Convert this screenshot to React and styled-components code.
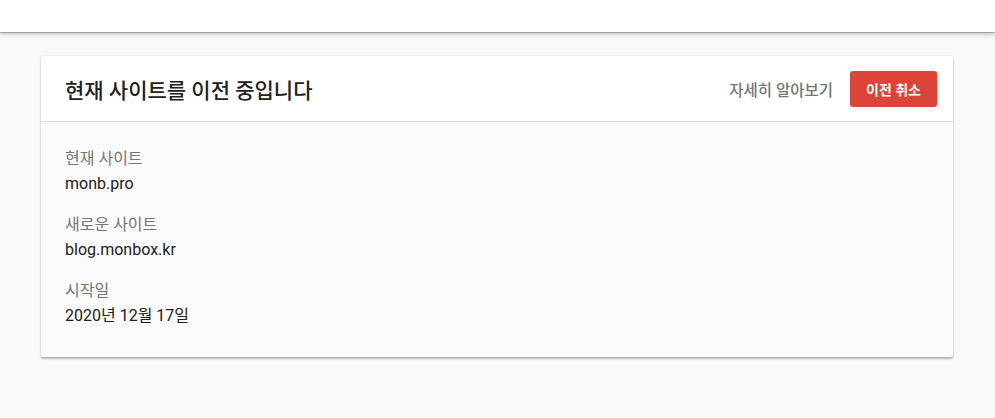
import React from "react";
import styled, { createGlobalStyle } from "styled-components";

const GlobalStyle = createGlobalStyle`
	body {
		margin: 0;
		background: #f9f9f9;
		font-family: Roboto, "Noto Sans CJK KR", "Noto Sans", sans-serif;
		color: #212121;
	}
`;

const Page = styled.div`
	min-height: 418px;
	padding-bottom: 24px;
	box-sizing: border-box;
`;

const TopBar = styled.header`
	height: 32px;
	background: #fff;
	box-shadow: 0 1px 1px rgba(0, 0, 0, 0.25), 0 2px 6px rgba(0, 0, 0, 0.2);
	position: relative;
	z-index: 1;
`;

const Card = styled.section`
	margin: 24px 42px 0 41px;
	background: #fafafa;
	box-shadow: 0 2px 2px rgba(0, 0, 0, 0.26), 0 0 2px rgba(0, 0, 0, 0.14);
	border-radius: 2px;
`;

const CardHeader = styled.div`
	display: flex;
	align-items: center;
	justify-content: space-between;
	height: 65px;
	padding: 0 16px 0 24px;
	background: #fff;
	border-bottom: 1px solid #e0e0e0;
	border-radius: 2px 2px 0 0;

	h2 {
		margin: 0;
		font-size: 21px;
		font-weight: 500;
		color: #212121;
	}
`;

const Actions = styled.div`
	display: flex;
	align-items: center;
	gap: 9px;
`;

const Button = styled.button`
	border: none;
	border-radius: 3px;
	height: 36px;
	font-family: inherit;
	font-weight: ${(p) => (p.$primary ? 700 : 500)};
	font-size: ${(p) => (p.$primary ? "14px" : "15.5px")};
	cursor: pointer;
	background: ${(p) => (p.$primary ? "#db4437" : "transparent")};
	color: ${(p) => (p.$primary ? "#fff" : "#757575")};
	padding: ${(p) => (p.$primary ? "0 16px" : "0 8px")};
`;

const CardBody = styled.div`
	padding: 24px 24px 29px;
	display: flex;
	flex-direction: column;
	gap: 16px;
`;

const Field = styled.dl`
	margin: 0;
	font-size: 16px;
	line-height: 25px;

	dt {
		color: #757575;
	}
	dd {
		margin: 0;
		color: #212121;
	}
`;

const fields = [
	{ label: "현재 사이트", value: "monb.pro" },
	{ label: "새로운 사이트", value: "blog.monbox.kr" },
	{ label: "시작일", value: "2020년 12월 17일" },
];

const App = () => {
	return (
		<Page>
			<GlobalStyle />
			<TopBar />
			<Card>
				<CardHeader>
					<h2>현재 사이트를 이전 중입니다</h2>
					<Actions>
						<Button>자세히 알아보기</Button>
						<Button $primary>이전 취소</Button>
					</Actions>
				</CardHeader>
				<CardBody>
					{fields.map(({ label, value }) => (
						<Field key={label}>
							<dt>{label}</dt>
							<dd>{value}</dd>
						</Field>
					))}
				</CardBody>
			</Card>
		</Page>
	);
};

export default App;
